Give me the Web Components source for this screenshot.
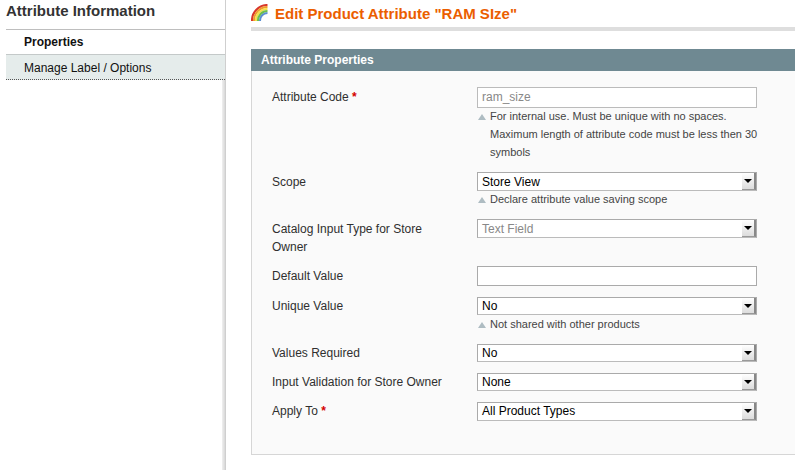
<!DOCTYPE html>
<html lang="en">
<head>
<meta charset="utf-8">
<title>Edit Product Attribute</title>
<style>
  html, body { margin: 0; padding: 0; background: #fff; }
  body { font: 12px/18px "Liberation Sans", Arial, sans-serif; color: #2f2f2f; height: 470px; overflow: hidden; }
</style>
</head>
<body>
<admin-page>
  <side-tabs slot="side" heading="Attribute Information">
    <side-tab active>Properties</side-tab>
    <side-tab>Manage Label / Options</side-tab>
  </side-tabs>

  <page-heading>Edit Product Attribute "RAM SIze"</page-heading>

  <form-panel heading="Attribute Properties">
    <form-row required>
      <span slot="label">Attribute Code</span>
      <text-box muted>ram_size</text-box>
      <field-hint>For internal use. Must be unique with no spaces.<br>Maximum length of attribute code must be less then 30<br>symbols</field-hint>
    </form-row>
    <form-row>
      <span slot="label">Scope</span>
      <select-box>Store View</select-box>
      <field-hint>Declare attribute value saving scope</field-hint>
    </form-row>
    <form-row>
      <span slot="label">Catalog Input Type for Store Owner</span>
      <select-box muted>Text Field</select-box>
    </form-row>
    <form-row>
      <span slot="label">Default Value</span>
      <text-box compact></text-box>
    </form-row>
    <form-row>
      <span slot="label">Unique Value</span>
      <select-box compact>No</select-box>
      <field-hint flush>Not shared with other products</field-hint>
    </form-row>
    <form-row>
      <span slot="label">Values Required</span>
      <select-box compact>No</select-box>
    </form-row>
    <form-row>
      <span slot="label">Input Validation for Store Owner</span>
      <select-box compact>None</select-box>
    </form-row>
    <form-row required>
      <span slot="label">Apply To</span>
      <select-box compact style="height: 19px">All Product Types</select-box>
    </form-row>
  </form-panel>
</admin-page>

<script>
  class AdminPage extends HTMLElement {
    constructor() {
      super();

      this.root = this.attachShadow({ mode: 'open' });
    }

    connectedCallback() {
      this.root.innerHTML = `
        <aside><slot name="side"></slot></aside>
        <main><slot></slot></main>

        <style>
          :host {
            display: grid;
            grid-template-columns: 226px 1fr;
            height: 470px;
          }

          aside {
            background: linear-gradient(to right, #f0f0f0, #d8d8d8) no-repeat right top / 3px 100%;
            border-right: 1px solid #cfcfcf;
            padding-left: 6px;
          }

          main {
            padding: 0 0 0 25px;
            min-width: 0;
          }
        </style>
      `;
    }
  }

  class SideTabs extends HTMLElement {
    constructor() {
      super();

      this.root = this.attachShadow({ mode: 'open' });
    }

    connectedCallback() {
      this.root.innerHTML = `
        <h3>${this.getAttribute('heading')}</h3>
        <slot></slot>

        <style>
          :host {
            background: #fff;
            display: block;
          }

          h3 {
            border-bottom: 1px solid #bebebe;
            color: #333;
            font-size: 15px;
            font-weight: bold;
            height: 29px;
            line-height: 22px;
            margin: 0;
          }
        </style>
      `;
    }
  }

  class SideTab extends HTMLElement {
    constructor() {
      super();

      this.root = this.attachShadow({ mode: 'open' });
    }

    connectedCallback() {
      this.root.innerHTML = `
        <slot></slot>

        <style>
          :host {
            background: #e5eceb;
            border-bottom: 1px dotted #555;
            border-top: 1px solid #c4c9c9;
            color: #111;
            display: block;
            height: 24px;
            line-height: 26px;
            padding-left: 18px;
          }

          :host([active]) {
            background: #fff;
            border: 0;
            font-weight: bold;
            height: 24px;
            line-height: 24px;
          }
        </style>
      `;
    }
  }

  class PageHeading extends HTMLElement {
    constructor() {
      super();

      this.root = this.attachShadow({ mode: 'open' });
    }

    connectedCallback() {
      this.root.innerHTML = `
        <svg width="17" height="17" viewBox="0 0 17 17" aria-hidden="true">
          <g fill="none" stroke-width="2.1">
            <path d="M1 17A15.5 15.5 0 0 1 16.5 1" stroke="#d8362a"/>
            <path d="M3 17A13.5 13.5 0 0 1 16.5 3" stroke="#f09a2c"/>
            <path d="M5 17A11.5 11.5 0 0 1 16.5 5" stroke="#f2e04a"/>
            <path d="M7 17A9.5 9.5 0 0 1 16.5 7" stroke="#6fbf4a"/>
            <path d="M9 17A7.5 7.5 0 0 1 16.5 9" stroke="#5b8fd0"/>
          </g>
        </svg>
        <h3><slot></slot></h3>

        <style>
          :host {
            align-items: flex-start;
            border-bottom: 4px solid #dedede;
            display: flex;
            gap: 7px;
            height: 27px;
            margin-bottom: 18px;
          }

          svg {
            flex: 0 0 auto;
            margin-top: 4px;
          }

          h3 {
            color: #eb5e00;
            font-size: 15px;
            font-weight: bold;
            line-height: 28px;
            margin: 0;
          }
        </style>
      `;
    }
  }

  class FormPanel extends HTMLElement {
    constructor() {
      super();

      this.root = this.attachShadow({ mode: 'open' });
    }

    connectedCallback() {
      this.root.innerHTML = `
        <h4>${this.getAttribute('heading')}</h4>
        <div class="body"><slot></slot></div>

        <style>
          :host {
            display: block;
          }

          h4 {
            background: #6f8992;
            color: #fff;
            font-size: 12px;
            font-weight: bold;
            height: 22px;
            line-height: 22px;
            margin: 0;
            padding-left: 10px;
          }

          .body {
            background: #fafafa;
            border-bottom: 1px solid #d6d6d6;
            border-left: 1px solid #d6d6d6;
            height: 367px;
            padding: 16px 0 0 20px;
          }
        </style>
      `;
    }
  }

  class FormRow extends HTMLElement {
    constructor() {
      super();

      this.root = this.attachShadow({ mode: 'open' });
    }

    connectedCallback() {
      this.root.innerHTML = `
        <div class="label"><slot name="label"></slot><span class="star"> *</span></div>
        <div class="value"><slot></slot></div>

        <style>
          :host {
            display: grid;
            grid-template-columns: 205px 280px;
            padding-bottom: 10px;
          }

          .label {
            color: #2f2f2f;
            padding-top: 1px;
            padding-right: 20px;
          }

          .star {
            color: #d40000;
            display: none;
            font-weight: bold;
          }

          :host([required]) .star {
            display: inline;
          }
        </style>
      `;
    }
  }

  class TextBox extends HTMLElement {
    constructor() {
      super();

      this.root = this.attachShadow({ mode: 'open' });
    }

    connectedCallback() {
      this.root.innerHTML = `
        <slot></slot>

        <style>
          :host {
            background: #fff;
            border: 1px solid #aaa;
            box-sizing: border-box;
            color: #111;
            display: block;
            height: 21px;
            line-height: 19px;
            padding-left: 4px;
          }

          :host([compact]) {
            height: 20px;
          }

          :host([muted]) {
            border-color: #bbb;
            color: #888;
          }
        </style>
      `;
    }
  }

  class SelectBox extends HTMLElement {
    constructor() {
      super();

      this.root = this.attachShadow({ mode: 'open' });
    }

    connectedCallback() {
      this.root.innerHTML = `
        <span class="text"><slot></slot></span>
        <span class="arrow"></span>

        <style>
          :host {
            background: #fff;
            border: 1px solid #aaa;
            border-bottom-color: #bbb;
            box-sizing: border-box;
            color: #000;
            display: flex;
            height: 19px;
            justify-content: space-between;
            line-height: 18px;
            padding-left: 4px;
          }

          :host([compact]) {
            height: 18px;
            line-height: 16px;
            margin-top: 1px;
          }

          :host([muted]) {
            color: #888;
          }

          .arrow {
            background: linear-gradient(#fff, #dcdcdc);
            border-bottom: 1px solid #999;
            border-right: 2px solid #888;
            box-sizing: border-box;
            position: relative;
            width: 14px;
          }

          .arrow::after {
            border-left: 4px solid transparent;
            border-right: 4px solid transparent;
            border-top: 4px solid #000;
            content: '';
            left: 2px;
            position: absolute;
            top: 6px;
          }
        </style>
      `;
    }
  }

  class FieldHint extends HTMLElement {
    constructor() {
      super();

      this.root = this.attachShadow({ mode: 'open' });
    }

    connectedCallback() {
      this.root.innerHTML = `
        <slot></slot>

        <style>
          :host {
            color: #444;
            display: block;
            font-size: 11px;
            line-height: 18px;
            margin: -1px 0 1px;
            padding-left: 13px;
            position: relative;
            white-space: nowrap;
          }

          :host([flush]) {
            margin: 0;
          }

          :host::before {
            border-bottom: 6px solid #aebcc2;
            border-left: 4px solid transparent;
            border-right: 4px solid transparent;
            content: '';
            left: 1px;
            position: absolute;
            top: 7px;
          }
        </style>
      `;
    }
  }

  customElements.define('admin-page', AdminPage);
  customElements.define('side-tabs', SideTabs);
  customElements.define('side-tab', SideTab);
  customElements.define('page-heading', PageHeading);
  customElements.define('form-panel', FormPanel);
  customElements.define('form-row', FormRow);
  customElements.define('text-box', TextBox);
  customElements.define('select-box', SelectBox);
  customElements.define('field-hint', FieldHint);
</script>
</body>
</html>
